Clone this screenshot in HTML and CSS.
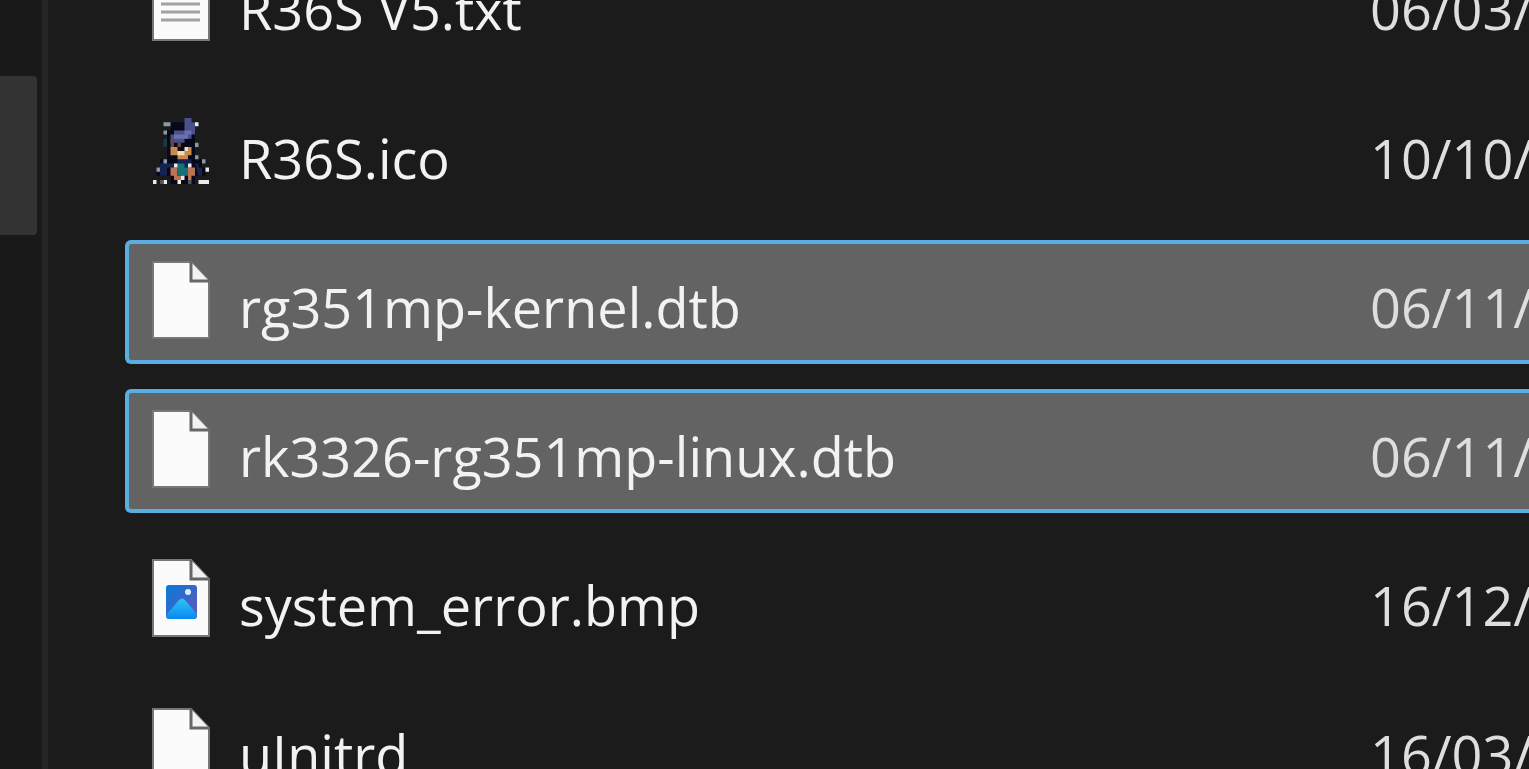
FILE: index.html
```html
<!DOCTYPE html>
<html lang="en">
<head>
    <meta charset="UTF-8">
    <meta name="viewport" content="width=device-width, initial-scale=1.0">
    <title>Files</title>
    <link rel="stylesheet" href="styles.css">
</head>
<body>
    <svg class="defs" aria-hidden="true">
        <symbol id="page" viewBox="0 0 60 80">
            <path d="M2 2H40L58 21V78H2Z" fill="#fbfbfb" stroke="#777" stroke-width="2"/>
            <path d="M40 2V21H58" fill="#f2f2f2" stroke="#666" stroke-width="3"/>
        </symbol>
    </svg>

    <div class="explorer">
        <nav class="sidebar" aria-label="Folders">
            <div class="sidebar-item"></div>
        </nav>

        <main class="files">
            <table class="file-table">
                <tbody>
                    <tr>
                        <td class="name"><div class="file">
                            <svg class="icon" viewBox="0 0 60 80" aria-hidden="true">
                                <use href="#page"/>
                                <path d="M10 26H49M10 34H49M10 42H49M10 50H49M10 58H49" stroke="#a2a2a2" stroke-width="3"/>
                            </svg>
                            <span class="label">R36S V5.txt</span>
                        </div></td>
                        <td class="date">06/03/</td>
                    </tr>
                    <tr>
                        <td class="name"><div class="file">
                            <svg class="icon sprite" viewBox="0 0 16 16" preserveAspectRatio="none" aria-hidden="true">
                                <path d="M5 1h7v9h-8v-7h1zM2 10h4v4h-5v-2h1zM11 10h3v2h1v2h-4zM5 10h7v6h-7z" fill="#07091b"/>
                                <path d="M2 11h4v1h-2v2h-2zM12 11h1v1h1v2h-1zM7 10h4v2h-4z" fill="#17234f"/>
                                <path d="M9 0h2v1h1v1h-1v1h-2zM5 4h1v-1h3v-1h3v2h-1v1h-2v1h-4z" fill="#4b508c"/>
                                <path d="M6 4h3v-1h2v1h-1v1h-4z" fill="#6b70ac"/>
                                <path d="M5 5h1v2h-1zM7 6h1v1h-1z" fill="#71413f"/>
                                <path d="M5 7h2v1h3v-1h1v2h-1v1h-3v-1h-2z" fill="#c78a52"/>
                                <path d="M7 8h2v1h-2zM9 7h1v1h-1z" fill="#f5dca8"/>
                                <path d="M5 12h2v2h1v1h-2v-1h-1zM10 12h2v2h-1v1h-1z" fill="#bd7352"/>
                                <path d="M7 11h2v1h1v2h-3z" fill="#167375"/>
                                <path d="M3 5h1v2h-1z" fill="#173c43"/>
                                <path d="M3 1h1v1h-1zM3 3h1v1h-1zM4 1h1v1h-1zM12 6h1v1h-1zM3 10h1v1h-1zM12 9h1v1h-1zM14 10h1v1h-1zM1 12h1v1h-1z" fill="#8c99a4"/>
                                <path d="M12 1h1v1h-1zM6 11h1v1h-1zM10 11h1v1h-1zM15 12h1v1h-1zM8 14h1v1h-1zM0 15h1v1h-1zM3 15h1v1h-1zM7 15h1v1h-1zM13 15h3v1h-3z" fill="#e8ebea"/>
                                <path d="M10 15h1v1h-1zM2 15h1v1h-1z" fill="#555"/>
                            </svg>
                            <span class="label">R36S.ico</span>
                        </div></td>
                        <td class="date">10/10/</td>
                    </tr>
                    <tr class="selected">
                        <td class="name"><div class="file">
                            <svg class="icon" viewBox="0 0 60 80" aria-hidden="true"><use href="#page"/></svg>
                            <span class="label">rg351mp-kernel.dtb</span>
                        </div></td>
                        <td class="date">06/11/</td>
                    </tr>
                    <tr class="selected">
                        <td class="name"><div class="file">
                            <svg class="icon" viewBox="0 0 60 80" aria-hidden="true"><use href="#page"/></svg>
                            <span class="label">rk3326-rg351mp-linux.dtb</span>
                        </div></td>
                        <td class="date">06/11/</td>
                    </tr>
                    <tr>
                        <td class="name"><div class="file">
                            <svg class="icon" viewBox="0 0 60 80" aria-hidden="true">
                                <defs>
                                    <linearGradient id="sky" x1="0" y1="0" x2="1" y2="1">
                                        <stop offset="0" stop-color="#087bd8"/>
                                        <stop offset="1" stop-color="#6654ba"/>
                                    </linearGradient>
                                    <linearGradient id="hill" x1="0" y1="0" x2="0" y2="1">
                                        <stop offset="0" stop-color="#32c5f5"/>
                                        <stop offset="1" stop-color="#0788f0"/>
                                    </linearGradient>
                                </defs>
                                <use href="#page"/>
                                <rect x="15" y="27" width="31" height="34" rx="3" fill="url(#sky)"/>
                                <path d="M16 56L28 42Q31 39 34 42L46 56Q46 61 42 61H19Q15 61 16 56Z" fill="url(#hill)"/>
                                <circle cx="37" cy="34" r="3" fill="#d8f1ff"/>
                            </svg>
                            <span class="label">system_error.bmp</span>
                        </div></td>
                        <td class="date">16/12/</td>
                    </tr>
                    <tr>
                        <td class="name"><div class="file">
                            <svg class="icon" viewBox="0 0 60 80" aria-hidden="true"><use href="#page"/></svg>
                            <span class="label">uInitrd</span>
                        </div></td>
                        <td class="date">16/03/</td>
                    </tr>
                </tbody>
            </table>
        </main>
    </div>
</body>
</html>
```

FILE: styles.css
```css
* {
    box-sizing: border-box;
}
body {
    margin: 0;
    background-color: #1b1b1b;
    color: #f2f2f2;
    font-family: "Open Sans", "Noto Sans", sans-serif;
    font-size: 54px;
    line-height: 72px;
}
.defs {
    display: block;
    width: 0;
    height: 0;
}
.explorer {
    display: flex;
    height: 100vh;
    overflow: hidden;
}
.sidebar {
    flex: none;
    width: 48px;
    padding: 76px 11px 0 0;
    border-right: 6px solid #252525;
    background-color: #191919;
    padding-right: 5px;
}
.sidebar-item {
    height: 159px;
    border-radius: 0 4px 4px 0;
    background-color: #333;
}
.files {
    flex: 1;
    min-width: 0;
    padding-left: 77px;
}
/* the list is scrolled, so the first row is cut by the top edge */
.file-table {
    width: 100%;
    margin-top: -83px;
    border-collapse: separate;
    border-spacing: 0 25px;
    table-layout: fixed;
}
td {
    height: 124px;
    padding: 0;
    border: 4px solid transparent;
    border-width: 4px 0;
    white-space: nowrap;
}
.name {
    padding-left: 22px;
    border-left-width: 4px;
}
.date {
    width: 159px;
    padding-top: 10px;
    color: #dedede;
}
.selected td {
    border-color: #5aade0;
    background-color: #636363;
}
.selected .name {
    border-radius: 6px 0 0 6px;
}
.file {
    display: flex;
    align-items: center;
    gap: 28px;
}
.label {
    padding-top: 10px;
}
.icon {
    flex: none;
    width: 60px;
    height: 80px;
    margin-bottom: 4px;
}
.sprite {
    height: 66px;
    padding: 0 2px;
}
```
